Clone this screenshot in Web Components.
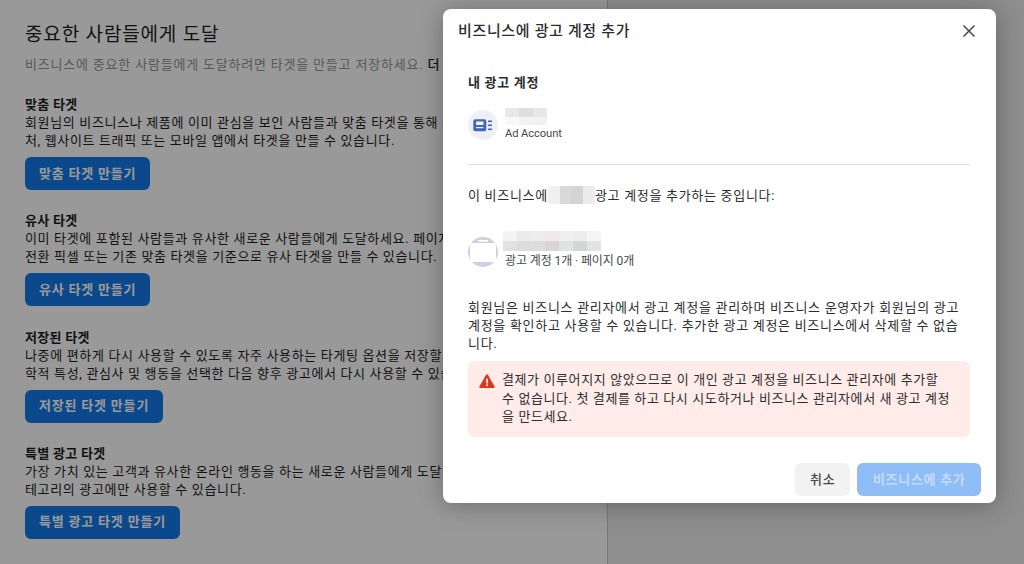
<!DOCTYPE html>
<html lang="ko">
<head>
<meta charset="utf-8">
<title>비즈니스에 광고 계정 추가</title>
<style>
    html,body{
        margin: 0;
        height: 100%;
        overflow: hidden;
        font-family: Roboto, 'Noto Sans CJK KR', 'Noto Sans', sans-serif;
    }
</style>
</head>
<body>
<audience-page>
    <audience-section heading="맞춤 타겟" action="맞춤 타겟 만들기">
        <div>회원님의 비즈니스나 제품에 이미 관심을 보인 사람들과 맞춤 타겟을 통해 다시</div>
        <div>처, 웹사이트 트래픽 또는 모바일 앱에서 타겟을 만들 수 있습니다.</div>
    </audience-section>
    <audience-section heading="유사 타겟" action="유사 타겟 만들기">
        <div>이미 타겟에 포함된 사람들과 유사한 새로운 사람들에게 도달하세요. 페이지</div>
        <div>전환 픽셀 또는 기존 맞춤 타겟을 기준으로 유사 타겟을 만들 수 있습니다.</div>
    </audience-section>
    <audience-section heading="저장된 타겟" action="저장된 타겟 만들기">
        <div>나중에 편하게 다시 사용할 수 있도록 자주 사용하는 타게팅 옵션을 저장할</div>
        <div>학적 특성, 관심사 및 행동을 선택한 다음 향후 광고에서 다시 사용할 수 있습니다.</div>
    </audience-section>
    <audience-section heading="특별 광고 타겟" action="특별 광고 타겟 만들기">
        <div>가장 가치 있는 고객과 유사한 온라인 행동을 하는 새로운 사람들에게 도달</div>
        <div>테고리의 광고에만 사용할 수 있습니다.</div>
    </audience-section>
</audience-page>
<add-account-modal></add-account-modal>

<script>
const pageTemplate = document.createElement('template');
pageTemplate.innerHTML = `
    <style>
        :host{
            display: flex;
            height: 564px;
            background: #ededed;
        }
        #pane{
            width: 608px;
            box-sizing: border-box;
            background: #fff;
            border-right: 1px solid #c8c8c8;
            padding: 22px 0 0 25px;
            overflow: hidden;
            white-space: nowrap;
        }
        h1{
            margin: 0;
            font-size: 19px;
            line-height: 26px;
            letter-spacing: 0.85px;
            font-weight: 400;
            color: #1c1e21;
        }
        #intro{
            margin: 8px 0 22px;
            font-size: 13px;
            line-height: 18px;
            letter-spacing: 0.8px;
            color: #90949c;
        }
        #intro b{
            color: #1c1e21;
            font-weight: 500;
        }
    </style>
    <div id="pane">
        <h1>중요한 사람들에게 도달</h1>
        <p id="intro">비즈니스에 중요한 사람들에게 도달하려면 타겟을 만들고 저장하세요. <b>더 알아보기</b></p>
        <slot></slot>
    </div>
`
class AudiencePage extends HTMLElement{
    constructor(){
        super()
        this.attachShadow({mode:'open'});
        this.shadowRoot.appendChild(pageTemplate.content.cloneNode(true));
    }
}

const sectionTemplate = document.createElement('template');
sectionTemplate.innerHTML = `
    <style>
        :host{
            display: block;
            margin-bottom: 22.33px;
            font-size: 13px;
            line-height: 18px;
            letter-spacing: 0.65px;
            color: #1c1e21;
        }
        #title{
            font-weight: 700;
            letter-spacing: 0.3px;
        }
        #text{
            margin-bottom: 7px;
        }
    </style>
    <div id="title"></div>
    <div id="text"><slot></slot></div>
    <fb-button kind="primary"></fb-button>
`
class AudienceSection extends HTMLElement{
    constructor(){
        super()
        this.attachShadow({mode:'open'});
        this.shadowRoot.appendChild(sectionTemplate.content.cloneNode(true));
        this.shadowRoot.getElementById('title').textContent = this.getAttribute('heading');
        this.shadowRoot.querySelector('fb-button').textContent = this.getAttribute('action');
    }
}

const buttonTemplate = document.createElement('template');
buttonTemplate.innerHTML = `
    <style>
        :host{
            display: inline-flex;
            align-items: center;
            justify-content: center;
            box-sizing: border-box;
            height: 33px;
            padding: 0 14px;
            border-radius: 6px;
            font-size: 13px;
            font-weight: 700;
            letter-spacing: 0.8px;
            white-space: nowrap;
        }
        :host([kind=primary]){
            background: #1479ea;
            color: #fff;
        }
        :host([kind=secondary]){
            padding: 0 15px;
            background: #f2f2f2;
            color: #444950;
            font-weight: 500;
        }
        :host([kind=disabled]){
            padding: 0 15.5px;
            background: #8fbdf5;
            color: #c4dcf9;
            letter-spacing: 0.7px;
        }
    </style>
    <slot></slot>
`
class FbButton extends HTMLElement{
    constructor(){
        super()
        this.attachShadow({mode:'open'});
        this.shadowRoot.appendChild(buttonTemplate.content.cloneNode(true));
    }
}

// the blurred out names in the screenshot
class MosaicBlock extends HTMLElement{
    constructor(){
        super()
        this.attachShadow({mode:'open'});
        const cols = this.getAttribute('cols');
        const cells = this.getAttribute('cells').split(' ')
            .map(c => `<i style="background:${c}"></i>`).join('');
        this.shadowRoot.innerHTML = `
            <style>
                :host{
                    display: inline-grid;
                    grid-template-columns: repeat(${cols}, ${this.getAttribute('cell-w')}px);
                    grid-auto-rows: ${this.getAttribute('cell-h')}px;
                    vertical-align: top;
                }
            </style>
            ${cells}
        `;
    }
}

const rowTemplate = document.createElement('template');
rowTemplate.innerHTML = `
    <style>
        :host{
            display: flex;
            align-items: center;
            gap: 7px;
        }
        #sub{
            font-size: var(--sub-size, 12px);
            line-height: 16px;
            letter-spacing: -0.1px;
            color: #444950;
            white-space: nowrap;
        }
        ::slotted(svg){
            display: block;
            flex: none;
        }
    </style>
    <slot name="icon"></slot>
    <div>
        <slot name="name"></slot>
        <div id="sub"><slot></slot></div>
    </div>
`
class AccountRow extends HTMLElement{
    constructor(){
        super()
        this.attachShadow({mode:'open'});
        this.shadowRoot.appendChild(rowTemplate.content.cloneNode(true));
    }
}

const noticeTemplate = document.createElement('template');
noticeTemplate.innerHTML = `
    <style>
        :host{
            display: flex;
            gap: 7px;
            box-sizing: border-box;
            height: 76px;
            padding: 10px 0 0 11px;
            border-radius: 6px;
            background: #ffebe7;
            font-size: 13px;
            line-height: 18.5px;
            letter-spacing: 0.6px;
            color: #2b2d31;
            white-space: nowrap;
        }
        svg{
            flex: none;
            margin-top: 2px;
        }
    </style>
    <svg width="16" height="16" viewBox="0 0 16 16">
        <path d="M8 1.2c-.4 0-.7.2-.9.5L.4 13.4c-.4.7.1 1.5.9 1.5h13.4c.8 0 1.3-.8.9-1.5L8.900 1.700C8.700 1.400 8.400 1.200 8 1.200z" fill="#d6391c"/>
        <rect x="7.200" y="5.500" width="1.600" height="5" rx=".6" fill="#fff"/>
        <circle cx="8" cy="12.300" r="1" fill="#fff"/>
    </svg>
    <div><slot></slot></div>
`
class WarningNotice extends HTMLElement{
    constructor(){
        super()
        this.attachShadow({mode:'open'});
        this.shadowRoot.appendChild(noticeTemplate.content.cloneNode(true));
    }
}

const modalTemplate = document.createElement('template');
modalTemplate.innerHTML = `
    <style>
        :host{
            position: absolute;
            inset: 0;
            display: block;
            background: rgba(0,0,0,0.4);
            padding: 9px 28px 0 443px;
        }
        #dialog{
            box-sizing: border-box;
            height: 494px;
            background: #fff;
            border-radius: 8px;
            box-shadow: 0 2px 26px rgba(0,0,0,0.3);
            font-size: 13px;
            line-height: 18px;
            letter-spacing: 0.7px;
            color: #2b2d31;
            display: flex;
            flex-direction: column;
        }
        header{
            display: flex;
            align-items: center;
            justify-content: space-between;
            height: 44px;
            padding: 0 20px 0 15px;
        }
        h2{
            margin: 0;
            font-size: 15px;
            font-weight: 500;
            letter-spacing: 0.65px;
        }
        #body{
            padding: 21px 26px 0 25px;
            flex: 1;
        }
        h3{
            margin: 0 0 16px;
            font-size: 13px;
            line-height: 18px;
            font-weight: 700;
        }
        hr{
            border: 0;
            border-top: 1px solid #dadde1;
            margin: 22px 0 22px;
        }
        #adding{
            display: flex;
            align-items: flex-start;
            white-space: nowrap;
        }
        #adding mosaic-block{
            margin-top: -1px;
        }
        #own{
            --sub-size: 11.2px;
        }
        #business{
            margin: 26px 0 30px;
        }
        #business mosaic-block{
            margin: 0 0 2px -2px;
        }
        #business svg{
            margin-top: 3px;
        }
        #about{
            margin: 0 0 8px;
        }
        footer{
            display: flex;
            justify-content: flex-end;
            gap: 7px;
            padding: 0 15px 7px 0;
        }
    </style>
    <div id="dialog">
        <header>
            <h2>비즈니스에 광고 계정 추가</h2>
            <svg width="14" height="14" viewBox="0 0 14 14" stroke="#444950" stroke-width="1.500" fill="none">
                <path d="M1.500 1.500l11 11M12.500 1.500l-11 11"/>
            </svg>
        </header>
        <div id="body">
            <h3>내 광고 계정</h3>
            <account-row id="own">
                <svg slot="icon" width="30" height="30" viewBox="0 0 30 30">
                    <circle cx="15" cy="15" r="15" fill="#eef0f5"/>
                    <rect x="5.300" y="9.300" width="13" height="12" rx="2" fill="#4267b2"/>
                    <rect x="8" y="11.500" width="7.500" height="3.500" rx=".5" fill="#eef0f5"/>
                    <rect x="8" y="17" width="7.500" height="1.200" fill="#eef0f5"/>
                    <rect x="20" y="10.500" width="4" height="1.600" fill="#4267b2"/>
                    <rect x="20" y="14.500" width="4" height="1.600" fill="#4267b2"/>
                    <rect x="20" y="18.500" width="4" height="1.600" fill="#4267b2"/>
                </svg>
                <mosaic-block slot="name" cols="3" cell-w="14" cell-h="8.500" cells="#e9e8e8 #dfdfdf #e9e6e3 #f8f8f8 #f3f3f3 #f0f0f5"></mosaic-block>
                Ad Account
            </account-row>
            <hr>
            <div id="adding">이 비즈니스에<mosaic-block cols="4" cell-w="11.750" cell-h="18" cells="#f0f0f0 #d9d9d9 #d4d4d4 #ececec"></mosaic-block>광고 계정을 추가하는 중입니다:</div>
            <account-row id="business">
                <svg slot="icon" width="30" height="30" viewBox="0 0 30 30">
                    <circle cx="15" cy="15" r="15" fill="#ccd2e4"/>
                    <rect x="2" y="6" width="26" height="19" rx="2" fill="#fff"/>
                    <rect x="10" y="3" width="10" height="1.600" fill="#fff"/>
                </svg>
                <mosaic-block slot="name" cols="7" cell-w="14" cell-h="10" cells="#f5f3f4 #ecebeb #eeeded #efe9ec #eeeff0 #ecedec #f5f5f6 #e2e1e1 #dcdcdb #dfdddc #dcd3d7 #dfe2e3 #d2d6d4 #e3e3e3"></mosaic-block>
                광고 계정 1개 · 페이지 0개
            </account-row>
            <p id="about">회원님은 비즈니스 관리자에서 광고 계정을 관리하며 비즈니스 운영자가 회원님의 광고 계정을 확인하고 사용할 수 있습니다. 추가한 광고 계정은 비즈니스에서 삭제할 수 없습니다.</p>
            <warning-notice>결제가 이루어지지 않았으므로 이 개인 광고 계정을 비즈니스 관리자에 추가할<br>수 없습니다. 첫 결제를 하고 다시 시도하거나 비즈니스 관리자에서 새 광고 계정<br>을 만드세요.</warning-notice>
        </div>
        <footer>
            <fb-button kind="secondary">취소</fb-button>
            <fb-button kind="disabled">비즈니스에 추가</fb-button>
        </footer>
    </div>
`
class AddAccountModal extends HTMLElement{
    constructor(){
        super()
        this.attachShadow({mode:'open'});
        this.shadowRoot.appendChild(modalTemplate.content.cloneNode(true));
    }
}

window.customElements.define('fb-button',FbButton)
window.customElements.define('mosaic-block',MosaicBlock)
window.customElements.define('account-row',AccountRow)
window.customElements.define('warning-notice',WarningNotice)
window.customElements.define('audience-section',AudienceSection)
window.customElements.define('audience-page',AudiencePage)
window.customElements.define('add-account-modal',AddAccountModal)
</script>
</body>
</html>
